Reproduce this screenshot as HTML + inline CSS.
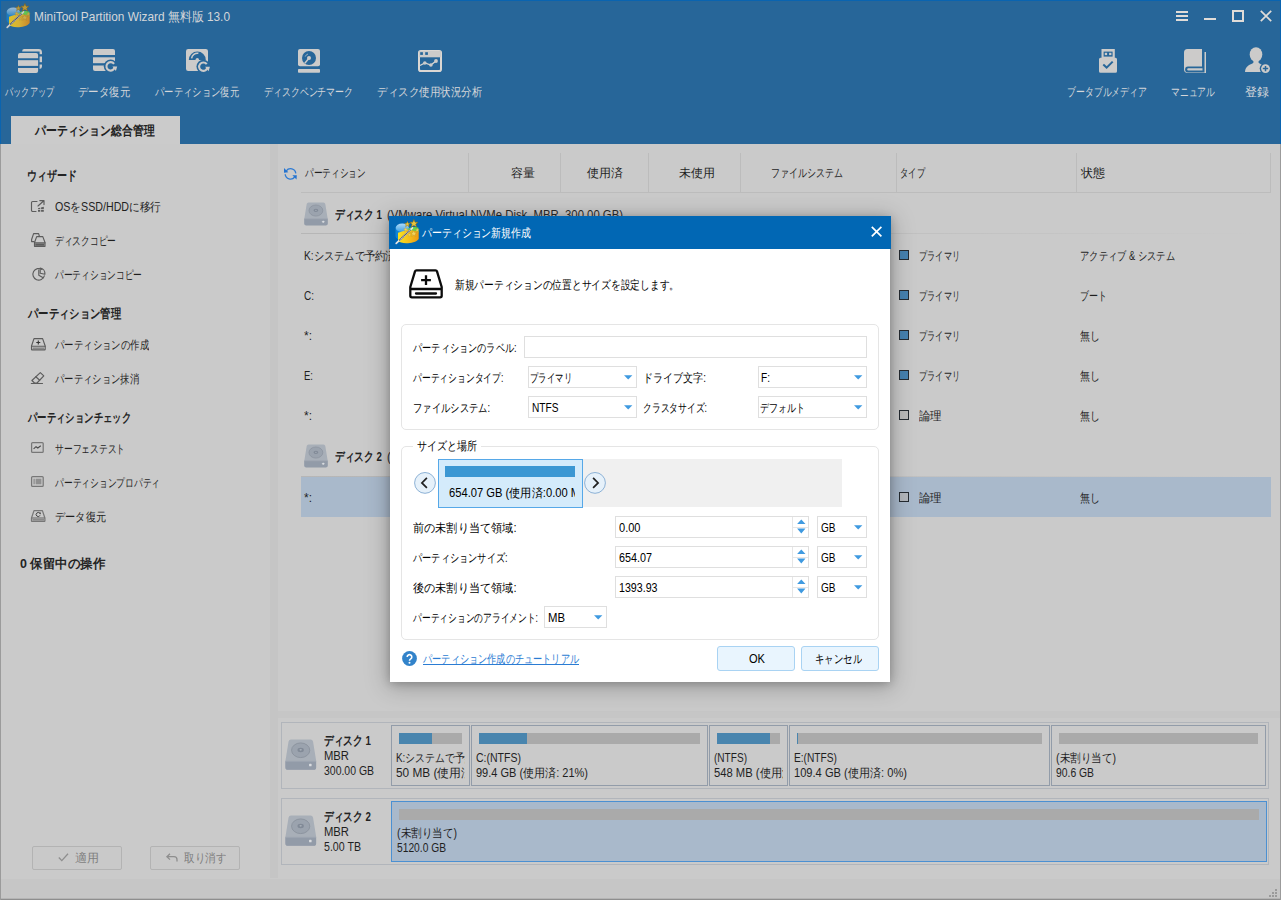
<!DOCTYPE html>
<html lang="ja">
<head>
<meta charset="utf-8">
<title>MiniTool Partition Wizard</title>
<style>
*{box-sizing:border-box;margin:0;padding:0}
html,body{width:1281px;height:900px;overflow:hidden;background:#cacaca}
body{font-family:"Liberation Sans",sans-serif;font-size:12px;color:#2a2a2a;position:relative}
.a{position:absolute;white-space:nowrap;overflow:hidden}
.t{position:absolute;white-space:nowrap;line-height:16px;height:16px;transform-origin:0 50%;font-size:12px}
svg{position:absolute;overflow:visible}
#hdr{left:0;top:0;width:1281px;height:144px;background:#266496}
.tl{color:#d4d6d9}
.sh{font-weight:bold;font-size:13px;color:#242424}
.si{color:#1f1f1f}
.btn{border:1px solid #b3b3b3;background:#c9c9c9;border-radius:2px}
.hs{width:1px;background:#bcbcbc}
.row{color:#1f1f1f}
.sq{border:1px solid #252b31}
.d{color:#000}
.gb{border:1px solid #e5e5e5;border-radius:5px}
.inp{border:1px solid #dfdfdf;background:#fff}
.dd{width:0;height:0;border-left:4.500px solid transparent;border-right:4.500px solid transparent;border-top:5px solid #3a96dd}
.dbtn{border:1px solid #a9d3f3;background:#e9f5fe;border-radius:3px}
</style>
</head>
<body>
<div class="a" style="left:0px;top:0px;width:1281px;height:144px;background:#276699"></div>
<div class="a" style="left:0px;top:0px;width:1281px;height:1px;background:#0a64b0"></div>
<div class="a" style="left:0px;top:0px;width:1px;height:144px;background:#0a64b0"></div>
<div class="a" style="left:1280px;top:0px;width:1px;height:144px;background:#0a64b0"></div>
<svg style="left:4.5px;top:3.3px" width="26" height="26" viewBox="0 0 26 26">
<defs>
<linearGradient id="wy" x1="0" x2="1" y1="0" y2="0"><stop offset="0" stop-color="#dcc228"/><stop offset=".5" stop-color="#d6b036"/><stop offset="1" stop-color="#c8862a"/></linearGradient>
<linearGradient id="wb" x1="0" x2="0" y1="0" y2="1"><stop offset="0" stop-color="#9fbdd6"/><stop offset="1" stop-color="#2f86c4"/></linearGradient>
</defs>
<path d="M1.500 9.500a7 4.300 0 0 1 14 0v7.500a7 4.300 0 0 1-14 0z" fill="#1c7cc0"/>
<ellipse cx="8.300" cy="8.700" rx="6.600" ry="4.300" fill="url(#wb)"/>
<path d="M13.500 10.500c2-2.500 8-3 11-1.800v5.300h-11z" fill="#5cc654"/>
<path d="M4 13.800l9.500-3 11.200 1.600v7.600c-2 3-8 4.200-12.400 4.200-4 0-7-1-8.300-2.200z" fill="url(#wy)"/>
<path d="M2.200 24.300L18.500 8.800" stroke="#c9c9c9" stroke-width="1.700" stroke-linecap="round"/>
<path d="M5.200 21.400L16.600 10.600" stroke="#50565c" stroke-width="1.700" stroke-dasharray="1.100 .5"/>
<g fill="#b9983a" stroke="#7d621c" stroke-width=".45">
<path d="M0-3.200L.9-1.100 3.100-1 1.400.5 2 2.700 0 1.500-2 2.700-1.400.5-3.100-1-.9-1.100z" transform="translate(13.400 5.200) scale(.9)"/>
<path d="M0-3.200L.9-1.100 3.100-1 1.400.5 2 2.700 0 1.500-2 2.700-1.400.5-3.100-1-.9-1.100z" transform="translate(19.900 4.600) scale(1.300)"/>
</g>
<g fill="#c9ab4c" stroke="#9a7d2a" stroke-width=".35">
<path d="M0-3.200L.9-1.100 3.100-1 1.400.5 2 2.700 0 1.500-2 2.700-1.400.5-3.100-1-.9-1.100z" transform="translate(11.700 10.600) scale(.68)"/>
<path d="M0-3.200L.9-1.100 3.100-1 1.400.5 2 2.700 0 1.500-2 2.700-1.400.5-3.100-1-.9-1.100z" transform="translate(19.700 14.600) scale(1)"/>
<path d="M0-3.200L.9-1.100 3.100-1 1.400.5 2 2.700 0 1.500-2 2.700-1.400.5-3.100-1-.9-1.100z" transform="translate(23.300 11.100) scale(.64)"/>
<path d="M0-3.200L.9-1.100 3.100-1 1.400.5 2 2.700 0 1.500-2 2.700-1.400.5-3.100-1-.9-1.100z" transform="translate(15.400 15.900) scale(.55)"/>
</g></svg>
<div class="t tl" style="left:34px;top:9px;--w:196;transform:scaleX(0.9134);font-size:13px">MiniTool Partition Wizard 無料版 13.0</div>
<div class="a" style="left:1176px;top:11px;width:12px;height:2px;background:#e0dcd8"></div>
<div class="a" style="left:1176px;top:15px;width:12px;height:2px;background:#e0dcd8"></div>
<div class="a" style="left:1176px;top:19px;width:12px;height:2px;background:#e0dcd8"></div>
<div class="a" style="left:1204px;top:18px;width:12px;height:2px;background:#e0dcd8"></div>
<div class="a" style="left:1232px;top:10px;width:12px;height:12px;border:2px solid #e0dcd8"></div>
<svg style="left:1260px;top:10px" width="12" height="12" viewBox="0 0 12 12"><path d="M.8.800l10.400 10.400M11.200.800L.800 11.200" stroke="#e0dcd8" stroke-width="1.700" fill="none"/></svg>
<svg style="left:18px;top:49px" width="24" height="24" viewBox="0 0 24 24">
<path d="M6.200 0H20.600A3.400 3.400 0 0 1 24 3.400V17.600A2.400 2.400 0 0 1 21.600 20V2.600H4.200V2A2 2 0 0 1 6.200 0z" fill="#cccbca"/>
<rect x="20.800" y="5.200" width="4" height="2.300" fill="#276699"/><rect x="20.800" y="13.200" width="4" height="2.300" fill="#276699"/>
<path d="M2 4.100H18.100A2 2 0 0 1 20.100 6.100V9.300H0V6.100A2 2 0 0 1 2 4.100z" fill="#cccbca"/>
<rect x="0" y="11.200" width="20.100" height="5.700" fill="#cccbca"/>
<path d="M0 18.900H20.100V22A2 2 0 0 1 18.100 24H2A2 2 0 0 1 0 22z" fill="#cccbca"/></svg>
<svg style="left:93px;top:49px" width="24" height="24" viewBox="0 0 24 24">
<path d="M2 0H20A2 2 0 0 1 22 2V5.900H0V2A2 2 0 0 1 2 0z" fill="#cccbca"/>
<rect x="0" y="8.300" width="22" height="5.900" fill="#cccbca"/>
<path d="M0 16.400H22V20A2 2 0 0 1 20 22H2A2 2 0 0 1 0 20z" fill="#cccbca"/><circle cx="17.6" cy="17.3" r="6.800000000000001" fill="#276699"/><path d="M21.04 14.91A4.2 4.2 0 1 0 21.80 17.90" fill="none" stroke="#cccbca" stroke-width="2.100"/><path d="M19.40 17.50h4.800l-1.300 4.500z" fill="#cccbca"/></svg>
<svg style="left:186px;top:49px" width="24" height="24" viewBox="0 0 24 24">
<rect x="0" y="0" width="22" height="22" rx="2.200" fill="#cccbca"/>
<path d="M2.800 11A8.500 8.500 0 0 1 19.800 11z" fill="#276699"/>
<path d="M5.600 9.400A5.800 5.800 0 0 1 12.400 4.300" fill="none" stroke="#cccbca" stroke-width="1.500"/>
<circle cx="11.300" cy="10.600" r="1.700" fill="#cccbca"/><circle cx="17.3" cy="17.6" r="6.800000000000001" fill="#276699"/><path d="M20.74 15.21A4.2 4.2 0 1 0 21.50 18.20" fill="none" stroke="#cccbca" stroke-width="2.100"/><path d="M19.10 17.80h4.800l-1.300 4.500z" fill="#cccbca"/></svg>
<svg style="left:298px;top:49px" width="22" height="24" viewBox="0 0 22 24">
<rect x="0" y="0" width="22" height="17.300" rx="2" fill="#cccbca"/>
<rect x="0" y="20" width="22" height="3.800" rx=".8" fill="#cccbca"/>
<circle cx="11" cy="9" r="7" fill="#276699"/>
<circle cx="11" cy="9" r="2" fill="#cccbca"/>
<path d="M10.500 9.800L6.800 14.200" stroke="#cccbca" stroke-width="1.500"/>
<path d="M7.200 7.600A4.200 4.200 0 0 1 10 5" stroke="#cccbca" stroke-width="1" fill="none" opacity=".7"/></svg>
<svg style="left:418px;top:50px" width="24" height="22" viewBox="0 0 24 22">
<rect x="1" y="1" width="22" height="20" rx="1.800" fill="none" stroke="#dbd7d3" stroke-width="2"/>
<rect x="1" y="1" width="22" height="6.300" fill="#cccbca"/>
<rect x="2.200" y="2.200" width="2.700" height="2.700" fill="#276699"/><rect x="7.200" y="2.200" width="2.700" height="2.700" fill="#276699"/>
<path d="M2 15.500L6.800 13 12.900 15 18 11" fill="none" stroke="#dbd7d3" stroke-width="1.300"/>
<circle cx="6.800" cy="13" r="1.800" fill="#cccbca"/><circle cx="12.900" cy="15" r="1.800" fill="#cccbca"/><circle cx="18" cy="11" r="1.900" fill="#cccbca"/></svg>
<svg style="left:1099px;top:49px" width="18" height="24" viewBox="0 0 18 24">
<path d="M2.500 0H15.800V9H2.500z" fill="#cccbca"/>
<rect x="4.600" y="2.600" width="9" height="5" fill="#276699"/>
<rect x="5.800" y="3.800" width="2.300" height="2.300" fill="#cccbca"/><rect x="10.100" y="3.800" width="2.300" height="2.300" fill="#cccbca"/>
<path d="M1.500 8.700H16.500A1.500 1.500 0 0 1 18 10.200V22.200A1.500 1.500 0 0 1 16.500 23.700H1.500A1.500 1.500 0 0 1 0 22.200V10.200A1.500 1.500 0 0 1 1.500 8.700z" fill="#cccbca"/>
<path d="M4.300 15.600L7.600 18.600 13.700 12.600" fill="none" stroke="#276699" stroke-width="2"/></svg>
<svg style="left:1184px;top:49px" width="22" height="24" viewBox="0 0 22 24">
<path d="M3.500 0H18V17.600H4A2.900 2.900 0 0 0 4 23.400H20.500V3H22V24H3.800A3.800 3.800 0 0 1 0 20.200V3.500A3.500 3.500 0 0 1 3.500 0z" fill="#cccbca"/>
<path d="M4.300 19.300H18.500V21.500H4.300A1.100 1.100 0 0 1 4.300 19.300z" fill="#cccbca"/></svg>
<svg style="left:1245px;top:47px" width="26" height="26" viewBox="0 0 26 26">
<ellipse cx="11" cy="7.600" rx="6.300" ry="7.400" fill="#cccbca"/>
<path d="M0 25C.4 19.500 4 18 7.800 16.300 8.800 15.800 8.600 14 8 13H14C13.400 14 13.200 15.800 14.200 16.300 18 18 21.600 19.500 22 25z" fill="#cccbca"/>
<circle cx="20.500" cy="21.600" r="5.800" fill="#276699"/>
<circle cx="20.500" cy="21.600" r="4.400" fill="#cccbca"/>
<path d="M20.500 18.900V24.300M17.800 21.600H23.200" stroke="#276699" stroke-width="1.500"/></svg>
<div class="t tl" style="left:5px;top:84px;--w:49;transform:scaleX(0.6806);">バックアップ</div>
<div class="t tl" style="left:78px;top:84px;--w:52;transform:scaleX(0.8667);">データ復元</div>
<div class="t tl" style="left:155px;top:84px;--w:84;transform:scaleX(0.7778);">パーティション復元</div>
<div class="t tl" style="left:264px;top:84px;--w:89;transform:scaleX(0.7417);">ディスクベンチマーク</div>
<div class="t tl" style="left:377px;top:84px;--w:105;transform:scaleX(0.875);">ディスク使用状況分析</div>
<div class="t tl" style="left:1067px;top:84px;--w:80;transform:scaleX(0.7407);">ブータブルメディア</div>
<div class="t tl" style="left:1171px;top:84px;--w:44;transform:scaleX(0.7333);">マニュアル</div>
<div class="t tl" style="left:1245px;top:84px;--w:24;transform:scaleX(1);">登録</div>
<div class="a" style="left:11px;top:116px;width:169px;height:28px;background:#cbcbcb"></div>
<div class="t" style="left:34.5px;top:123px;--w:119.5;transform:scaleX(0.8357);font-weight:bold;font-size:13px;color:#222">パーティション総合管理</div>
<div class="a" style="left:1px;top:144px;width:269px;height:734px;background:#cacaca"></div>
<div class="a" style="left:270px;top:144px;width:8px;height:734px;background:#c5c5c5"></div>
<div class="a" style="left:278px;top:144px;width:1003px;height:734px;background:#cacaca"></div>
<div class="a" style="left:0px;top:879px;width:1281px;height:20px;background:#c6c6c6"></div>
<div class="a" style="left:0px;top:898px;width:1281px;height:1px;background:#b4b4b4"></div>
<div class="a" style="left:0px;top:899px;width:1281px;height:1px;background:#8e8e8e"></div>
<div class="a" style="left:0px;top:144px;width:1px;height:756px;background:#9b9b9b"></div>
<div class="a" style="left:1280px;top:144px;width:1px;height:756px;background:#9b9b9b"></div>
<svg style="left:1269px;top:889px" width="9" height="9" viewBox="0 0 9 9"><g fill="#9a9a9a"><rect x="6" y="0" width="2" height="2"/><rect x="3" y="3" width="2" height="2"/><rect x="6" y="3" width="2" height="2"/><rect x="0" y="6" width="2" height="2"/><rect x="3" y="6" width="2" height="2"/><rect x="6" y="6" width="2" height="2"/></g></svg>
<div class="t sh" style="left:27px;top:168px;--w:50;transform:scaleX(0.7692);">ウィザード</div>
<div class="t si" style="left:55px;top:199px;--w:106;transform:scaleX(0.8882);">OSをSSD/HDDに移行</div>
<div class="t si" style="left:54.5px;top:233px;--w:61;transform:scaleX(0.7262);">ディスクコピー</div>
<div class="t si" style="left:55px;top:267px;--w:87;transform:scaleX(0.725);">パーティションコピー</div>
<div class="t sh" style="left:27.5px;top:306px;--w:93;transform:scaleX(0.7949);">パーティション管理</div>
<div class="t si" style="left:55px;top:337px;--w:94;transform:scaleX(0.7833);">パーティションの作成</div>
<div class="t si" style="left:55px;top:371px;--w:84;transform:scaleX(0.7778);">パーティション抹消</div>
<div class="t sh" style="left:27.5px;top:410px;--w:103;transform:scaleX(0.7203);">パーティションチェック</div>
<div class="t si" style="left:55px;top:441px;--w:70;transform:scaleX(0.7292);">サーフェステスト</div>
<div class="t si" style="left:55px;top:475px;--w:105;transform:scaleX(0.7292);">パーティションプロパティ</div>
<div class="t si" style="left:55px;top:509px;--w:51;transform:scaleX(0.85);">データ復元</div>
<div class="t sh" style="left:20px;top:556px;--w:85;transform:scaleX(0.9567);">0 保留中の操作</div>
<svg style="left:31px;top:200px" width="14" height="12" viewBox="0 0 14 12"><path d="M6 1.500H1.700A1.200 1.200 0 0 0 .5 2.700V10.300A1.200 1.200 0 0 0 1.700 11.500H5" fill="none" stroke="#5c5c5c" stroke-width="1.150" stroke-linejoin="round" stroke-linecap="round"/>
<path d="M7 6L12.800 .8M8.800 .6H13V4.600" fill="none" stroke="#5c5c5c" stroke-width="1.150" stroke-linejoin="round" stroke-linecap="round"/>
<path d="M7 8.300L12.800 6.800V11.800H7z" fill="#5c5c5c"/><path d="M9.600 6.500V12M6.800 9.500H13" stroke="#ccc" stroke-width=".8"/></svg>
<svg style="left:31px;top:233px" width="15" height="14" viewBox="0 0 15 14"><path d="M2.600 .6H7.600L8.300 3M.6 6.500L2.600 .6M.6 6.500V8.600H3" fill="none" stroke="#5c5c5c" stroke-width="1.150" stroke-linejoin="round" stroke-linecap="round"/>
<path d="M5.700 3.600H11.800L14 9.500V13.300H3.500V9.500z" fill="none" stroke="#5c5c5c" stroke-width="1.150" stroke-linejoin="round" stroke-linecap="round"/><path d="M3.500 9.800H14" fill="none" stroke="#5c5c5c" stroke-width="1.150" stroke-linejoin="round" stroke-linecap="round"/><rect x="4.200" y="10.500" width="9.200" height="2.300" fill="#5c5c5c"/></svg>
<svg style="left:31.5px;top:267px" width="13" height="14" viewBox="0 0 13 14"><path d="M10 2.500A5.800 5.800 0 1 0 12.300 8.800" fill="none" stroke="#5c5c5c" stroke-width="1.150" stroke-linejoin="round" stroke-linecap="round"/>
<path d="M6.800 2.800V8.200L11.200 10.800" fill="none" stroke="#5c5c5c" stroke-width="1.150" stroke-linejoin="round" stroke-linecap="round"/>
<path d="M8.200 1A5.800 5.800 0 0 1 12.900 7.200L8.200 6.300z" fill="none" stroke="#5c5c5c" stroke-width="1.150" stroke-linejoin="round" stroke-linecap="round"/></svg>
<svg style="left:31px;top:337.5px" width="15" height="12.5" viewBox="0 0 15 12.5"><path d="M3 .6H11.600L14.200 8V11.300A.6 .6 0 0 1 13.600 11.900H.9A.6 .6 0 0 1 .5 11.300V8z" fill="none" stroke="#5c5c5c" stroke-width="1.150" stroke-linejoin="round" stroke-linecap="round"/><path d="M.6 8.200H14" fill="none" stroke="#5c5c5c" stroke-width="1.150" stroke-linejoin="round" stroke-linecap="round"/>
<rect x="1.600" y="9.400" width="11.500" height="1.600" fill="#8a8a8a"/>
<path d="M7.300 2.500V6.500M5.300 4.500H9.300" stroke="#333" stroke-width="1.100"/></svg>
<svg style="left:31px;top:372px" width="13.5" height="12" viewBox="0 0 13.5 12"><path d="M9.300 .6L12.800 3.800 6 11H3.500L.9 8.500z" fill="none" stroke="#5c5c5c" stroke-width="1.150" stroke-linejoin="round" stroke-linecap="round"/><path d="M4.800 4.700L8.700 8.200" fill="none" stroke="#5c5c5c" stroke-width="1.150" stroke-linejoin="round" stroke-linecap="round"/><path d="M.3 11.500H11.500" fill="none" stroke="#5c5c5c" stroke-width="1.150" stroke-linejoin="round" stroke-linecap="round"/></svg>
<svg style="left:31.4px;top:442.3px" width="12.8" height="11" viewBox="0 0 12.8 11"><rect x=".6" y=".6" width="11.600" height="9.800" rx="1" fill="none" stroke="#777" stroke-width="1.250" stroke-linejoin="round"/>
<path d="M2.600 6.800L5 4.700 6.800 6 9.800 3.800" fill="none" stroke="#4a4a4a" stroke-width="1.100"/></svg>
<svg style="left:31.4px;top:476.2px" width="12.8" height="11" viewBox="0 0 12.8 11"><rect x=".6" y=".6" width="11.600" height="9.800" rx="1" fill="none" stroke="#777" stroke-width="1.250" stroke-linejoin="round"/>
<rect x="2.500" y="2.700" width="1.200" height="5.600" fill="#888"/><rect x="4.600" y="2.700" width="5.800" height="5.600" fill="#909090"/></svg>
<svg style="left:31px;top:510px" width="14.5" height="12" viewBox="0 0 14.5 12"><path d="M3 .6H11.400L13.900 8V10.800A.6 .6 0 0 1 13.300 11.400H1.100A.6 .6 0 0 1 .5 10.800V8z" fill="none" stroke="#777" stroke-width="1.250" stroke-linejoin="round"/><path d="M.6 8H13.900" fill="none" stroke="#777" stroke-width="1.250" stroke-linejoin="round"/>
<rect x="1.500" y="9" width="11.500" height="1.700" fill="#8a8a8a"/>
<path d="M8.800 3.400A2 2 0 1 0 9 5.300" fill="none" stroke="#444" stroke-width="1"/><path d="M7.600 2.400H9.800V4.400z" fill="#444"/></svg>
<div class="a btn" style="left:32px;top:846px;width:90px;height:24px;"></div>
<div class="a btn" style="left:150px;top:846px;width:90px;height:24px;"></div>
<svg style="left:58px;top:853px" width="11" height="9" viewBox="0 0 11 9"><path d="M.8 4.500L3.800 7.600 10 .8" fill="none" stroke="#8e8e8e" stroke-width="1.300"/></svg>
<div class="t" style="left:74.5px;top:850px;--w:24;transform:scaleX(1);color:#7e7e7e">適用</div>
<svg style="left:166px;top:853px" width="12" height="9" viewBox="0 0 12 9"><path d="M4 .8L.9 3.700 4 6.600M1 3.700H8A3 3 0 0 1 11 6.700V8.500" fill="none" stroke="#8e8e8e" stroke-width="1.300"/></svg>
<div class="t" style="left:184px;top:850px;--w:42;transform:scaleX(0.875);color:#7e7e7e">取り消す</div>
<svg style="left:283.5px;top:167px" width="13" height="13" viewBox="0 0 13 13"><path d="M2.300 3.800A5.300 5.300 0 0 1 11.800 6.300M1.200 7.300A5.300 5.300 0 0 0 10.700 10" fill="none" stroke="#2e7bd4" stroke-width="1.350"/>
<path d="M0 1V5.700L4.300 5.300z" fill="#2473cf"/><path d="M8.400 8.300H12.800L12.500 12.400z" fill="#2473cf"/></svg>
<div class="t row" style="left:304.5px;top:165px;--w:60.5;transform:scaleX(0.7202);">パーティション</div>
<div class="t row" style="left:511px;top:165px;--w:24;transform:scaleX(1);">容量</div>
<div class="t row" style="left:586.5px;top:165px;--w:36;transform:scaleX(1);">使用済</div>
<div class="t row" style="left:679px;top:165px;--w:36;transform:scaleX(1);">未使用</div>
<div class="t row" style="left:771px;top:165px;--w:72;transform:scaleX(0.75);">ファイルシステム</div>
<div class="t row" style="left:900px;top:165px;--w:25;transform:scaleX(0.6944);">タイプ</div>
<div class="t row" style="left:1081px;top:165px;--w:24;transform:scaleX(1);">状態</div>
<div class="a hs" style="left:468px;top:153px;width:1px;height:39px;"></div>
<div class="a hs" style="left:560px;top:153px;width:1px;height:39px;"></div>
<div class="a hs" style="left:648px;top:153px;width:1px;height:39px;"></div>
<div class="a hs" style="left:740px;top:153px;width:1px;height:39px;"></div>
<div class="a hs" style="left:896px;top:153px;width:1px;height:39px;"></div>
<div class="a hs" style="left:1076px;top:153px;width:1px;height:39px;"></div>
<div class="a hs" style="left:1270px;top:153px;width:1px;height:39px;"></div>
<div class="a" style="left:301px;top:192px;width:970px;height:1px;background:#bcbcbc"></div>
<svg width="0" height="0" style="left:0;top:0"><defs>
<symbol id="hdd" viewBox="0 0 24 24" preserveAspectRatio="none">
<path d="M4.600 .4H19.400A2 2 0 0 1 21.300 1.900L23.700 16.800V21.600A2 2 0 0 1 21.700 23.600H2.300A2 2 0 0 1 .3 21.600V16.800L2.700 1.900A2 2 0 0 1 4.600 .4z" fill="#a8afb8"/>
<path d="M.3 17H23.700V21.600A2 2 0 0 1 21.700 23.600H2.300A2 2 0 0 1 .3 21.600z" fill="#929ba8"/>
<path d="M.3 17H23.700" stroke="#a0a8b3" stroke-width=".6"/>
<ellipse cx="11.900" cy="8.600" rx="6.900" ry="5.600" fill="#9ba3ae" stroke="#8a929d" stroke-width=".7"/>
<ellipse cx="11.900" cy="8.400" rx="2.400" ry="1.700" fill="#818a97"/><ellipse cx="11.900" cy="8.300" rx=".9" ry=".6" fill="#a9b0b9"/>
<rect x="18.300" y="19" width="1.900" height="1.900" rx=".5" fill="#d9dcdf"/>
</symbol></defs></svg>
<svg style="left:304.2px;top:202px" width="24" height="23.8"><use href="#hdd"/></svg>
<div class="t" style="left:335px;top:207px;--w:47;transform:scaleX(0.7479);font-weight:bold;font-size:13px;color:#222">ディスク 1</div>
<div class="t" style="left:387px;top:207px;--w:236;transform:scaleX(0.8719);font-size:13px;color:#2a2a2a">(VMware Virtual NVMe Disk, MBR, 300.00 GB)</div>
<div class="a" style="left:301px;top:233px;width:962px;height:1px;background:linear-gradient(90deg,#b6b6b6 0,#bdbdbd 50%,#cacaca 100%)"></div>
<div class="t row" style="left:304px;top:248px;--w:102;transform:scaleX(0.8547);">K:システムで予約済み</div>
<div class="t row" style="left:304px;top:288px;--w:10;transform:scaleX(0.8333);">C:</div>
<div class="t row" style="left:304px;top:328px;--w:8;transform:scaleX(0.9981);">*:</div>
<div class="t row" style="left:304px;top:368px;--w:9;transform:scaleX(0.7934);">E:</div>
<div class="t row" style="left:304px;top:408px;--w:8;transform:scaleX(0.9981);">*:</div>
<svg style="left:304.2px;top:444px" width="24" height="23.8"><use href="#hdd"/></svg>
<div class="t" style="left:335px;top:449px;--w:47;transform:scaleX(0.7479);font-weight:bold;font-size:13px;color:#222">ディスク 2</div>
<div class="t" style="left:387px;top:449px;--w:220;transform:scaleX(0.8668);font-size:13px;color:#2a2a2a">(VMware Virtual NVMe Disk, MBR, 5.00 TB)</div>
<div class="a" style="left:301px;top:476px;width:962px;height:1px;background:linear-gradient(90deg,#b6b6b6 0,#bdbdbd 50%,#cacaca 100%)"></div>
<div class="a" style="left:301px;top:477px;width:970px;height:40px;background:#a9b9cb"></div>
<div class="t row" style="left:304px;top:490px;--w:8;transform:scaleX(0.9981);">*:</div>
<div class="a sq" style="left:899px;top:250px;width:10px;height:10px;background:#4682b0"></div>
<div class="t row" style="left:919px;top:248px;--w:41;transform:scaleX(0.6833);">プライマリ</div>
<div class="t row" style="left:1080px;top:248px;--w:95;transform:scaleX(0.7744);">アクティブ &amp; システム</div>
<div class="a sq" style="left:899px;top:290px;width:10px;height:10px;background:#4682b0"></div>
<div class="t row" style="left:919px;top:288px;--w:41;transform:scaleX(0.6833);">プライマリ</div>
<div class="t row" style="left:1080px;top:288px;--w:27;transform:scaleX(0.75);">ブート</div>
<div class="a sq" style="left:899px;top:330px;width:10px;height:10px;background:#4682b0"></div>
<div class="t row" style="left:919px;top:328px;--w:41;transform:scaleX(0.6833);">プライマリ</div>
<div class="t row" style="left:1080px;top:328px;--w:20;transform:scaleX(0.8333);">無し</div>
<div class="a sq" style="left:899px;top:370px;width:10px;height:10px;background:#4682b0"></div>
<div class="t row" style="left:919px;top:368px;--w:41;transform:scaleX(0.6833);">プライマリ</div>
<div class="t row" style="left:1080px;top:368px;--w:20;transform:scaleX(0.8333);">無し</div>
<div class="a sq" style="left:899px;top:410px;width:10px;height:10px;background:#bababa"></div>
<div class="t row" style="left:919px;top:408px;--w:23;transform:scaleX(0.9583);">論理</div>
<div class="t row" style="left:1080px;top:408px;--w:20;transform:scaleX(0.8333);">無し</div>
<div class="a sq" style="left:899px;top:492px;width:10px;height:10px;background:#b3b7bc"></div>
<div class="t row" style="left:919px;top:490px;--w:23;transform:scaleX(0.9583);">論理</div>
<div class="t row" style="left:1080px;top:490px;--w:20;transform:scaleX(0.8333);">無し</div>
<div class="a" style="left:278px;top:711px;width:1002px;height:7px;background:#c6c6c6"></div>
<div class="a" style="left:281px;top:722px;width:988px;height:67px;border:1px solid #b1b5bb"></div>
<div class="a" style="left:281px;top:798px;width:988px;height:67px;border:1px solid #b1b5bb"></div>
<svg style="left:285.4px;top:739px" width="31.6" height="31.4"><use href="#hdd"/></svg>
<svg style="left:285.4px;top:815.3px" width="31.6" height="31.4"><use href="#hdd"/></svg>
<div class="t" style="left:324px;top:733px;--w:47;transform:scaleX(0.7479);font-weight:bold;font-size:13px;color:#222">ディスク 1</div>
<div class="t row" style="left:324px;top:748px;--w:25;transform:scaleX(0.9373);">MBR</div>
<div class="t row" style="left:324px;top:763px;--w:50;transform:scaleX(0.8715);">300.00 GB</div>
<div class="t" style="left:324px;top:809px;--w:47;transform:scaleX(0.7479);font-weight:bold;font-size:13px;color:#222">ディスク 2</div>
<div class="t row" style="left:324px;top:824px;--w:25;transform:scaleX(0.9373);">MBR</div>
<div class="t row" style="left:324px;top:839px;--w:37;transform:scaleX(0.8849);">5.00 TB</div>
<div class="a" style="left:391px;top:725px;width:79px;height:61px;border:1px solid #929ca9"></div>
<div class="a" style="left:399px;top:733px;width:63px;height:11px;background:#aaaaaa"></div>
<div class="a" style="left:399px;top:733px;width:33px;height:11px;background:#4985ae"></div>
<div class="a" style="left:396px;top:749.5px;width:69px;height:16px"><div class="t row" style="left:0;top:0;--w:98.2;transform:scaleX(0.8228);">K:システムで予約済み</div></div>
<div class="a" style="left:396px;top:764.5px;width:69px;height:16px"><div class="t row" style="left:0;top:0;--w:111;transform:scaleX(0.9849);">50 MB (使用済: 53%)</div></div>
<div class="a" style="left:471px;top:725px;width:237px;height:61px;border:1px solid #929ca9"></div>
<div class="a" style="left:479px;top:733px;width:221px;height:11px;background:#aaaaaa"></div>
<div class="a" style="left:479px;top:733px;width:48px;height:11px;background:#4985ae"></div>
<div class="a" style="left:476px;top:749.5px;width:227px;height:16px"><div class="t row" style="left:0;top:0;--w:45;transform:scaleX(0.8767);">C:(NTFS)</div></div>
<div class="a" style="left:476px;top:764.5px;width:227px;height:16px"><div class="t row" style="left:0;top:0;--w:112;transform:scaleX(0.9177);">99.4 GB (使用済: 21%)</div></div>
<div class="a" style="left:709px;top:725px;width:79px;height:61px;border:1px solid #929ca9"></div>
<div class="a" style="left:717px;top:733px;width:63px;height:11px;background:#aaaaaa"></div>
<div class="a" style="left:717px;top:733px;width:53px;height:11px;background:#4985ae"></div>
<div class="a" style="left:714px;top:749.5px;width:69px;height:16px"><div class="t row" style="left:0;top:0;--w:33;transform:scaleX(0.8391);">(NTFS)</div></div>
<div class="a" style="left:714px;top:764.5px;width:69px;height:16px"><div class="t row" style="left:0;top:0;--w:111.7;transform:scaleX(0.9357);">548 MB (使用済: 80%)</div></div>
<div class="a" style="left:789px;top:725px;width:261px;height:61px;border:1px solid #929ca9"></div>
<div class="a" style="left:797px;top:733px;width:245px;height:11px;background:#aaaaaa"></div>
<div class="a" style="left:797px;top:733px;width:1px;height:11px;background:#4985ae"></div>
<div class="a" style="left:794px;top:749.5px;width:251px;height:16px"><div class="t row" style="left:0;top:0;--w:43;transform:scaleX(0.8486);">E:(NTFS)</div></div>
<div class="a" style="left:794px;top:764.5px;width:251px;height:16px"><div class="t row" style="left:0;top:0;--w:113;transform:scaleX(0.9259);">109.4 GB (使用済: 0%)</div></div>
<div class="a" style="left:1051px;top:725px;width:215px;height:61px;border:1px solid #929ca9"></div>
<div class="a" style="left:1059px;top:733px;width:199px;height:11px;background:#aaaaaa"></div>
<div class="a" style="left:1056px;top:749.5px;width:205px;height:16px"><div class="t row" style="left:0;top:0;--w:60;transform:scaleX(0.8824);">(未割り当て)</div></div>
<div class="a" style="left:1056px;top:764.5px;width:205px;height:16px"><div class="t row" style="left:0;top:0;--w:38;transform:scaleX(0.863);">90.6 GB</div></div>
<div class="a" style="left:391px;top:801px;width:876px;height:61px;border:1px solid #4b90d2;background:#a9b9cb"></div>
<div class="a" style="left:399px;top:809px;width:860px;height:11px;background:#aaaaaa"></div>
<div class="t row" style="left:396.5px;top:825px;--w:60;transform:scaleX(0.8824);">(未割り当て)</div>
<div class="t row" style="left:396.5px;top:840px;--w:49;transform:scaleX(0.854);">5120.0 GB</div>
<div class="a" style="left:390px;top:217px;width:500px;height:465px;background:#fff;box-shadow:0 3px 22px 3px rgba(0,0,0,.22),0 1px 9px 0 rgba(0,0,0,.24);overflow:visible"></div>
<div class="a" style="left:389px;top:216px;width:502px;height:33px;background:#0167b4"></div>
<svg style="left:394.4px;top:219.4px" width="26" height="26" viewBox="0 0 26 26">
<defs>
<linearGradient id="vy" x1="0" x2="1" y1="0" y2="0"><stop offset="0" stop-color="#fbe41c"/><stop offset=".5" stop-color="#f4c21c"/><stop offset="1" stop-color="#ee9a12"/></linearGradient>
<linearGradient id="vb" x1="0" x2="0" y1="0" y2="1"><stop offset="0" stop-color="#b4dcf6"/><stop offset="1" stop-color="#3aa0e6"/></linearGradient>
</defs>
<path d="M1.500 9.500a7 4.300 0 0 1 14 0v7.500a7 4.300 0 0 1-14 0z" fill="#0f84d8"/>
<ellipse cx="8.300" cy="8.700" rx="6.600" ry="4.300" fill="url(#vb)"/>
<path d="M13.500 10.500c2-2.500 8-3 11-1.800v5.300h-11z" fill="#62d44e"/>
<path d="M4 13.800l9.500-3 11.200 1.600v7.600c-2 3-8 4.200-12.400 4.200-4 0-7-1-8.300-2.200z" fill="url(#vy)"/>
<path d="M2.200 24.300L18.500 8.800" stroke="#e4e4e4" stroke-width="1.700" stroke-linecap="round"/>
<path d="M5.200 21.400L16.600 10.600" stroke="#5a5f66" stroke-width="1.700" stroke-dasharray="1.100 .5"/>
<g fill="#e9c53c" stroke="#8a6a14" stroke-width=".45">
<path d="M0-3.200L.9-1.100 3.100-1 1.400.5 2 2.700 0 1.500-2 2.700-1.400.5-3.100-1-.9-1.100z" transform="translate(13.400 5.200) scale(.9)"/>
<path d="M0-3.200L.9-1.100 3.100-1 1.400.5 2 2.700 0 1.500-2 2.700-1.400.5-3.100-1-.9-1.100z" transform="translate(19.900 4.600) scale(1.300)"/>
</g>
<g fill="#f0d460" stroke="#b08a22" stroke-width=".35">
<path d="M0-3.200L.9-1.100 3.100-1 1.400.5 2 2.700 0 1.500-2 2.700-1.400.5-3.100-1-.9-1.100z" transform="translate(11.700 10.600) scale(.68)"/>
<path d="M0-3.200L.9-1.100 3.100-1 1.400.5 2 2.700 0 1.500-2 2.700-1.400.5-3.100-1-.9-1.100z" transform="translate(19.700 14.600) scale(1)"/>
<path d="M0-3.200L.9-1.100 3.100-1 1.400.5 2 2.700 0 1.500-2 2.700-1.400.5-3.100-1-.9-1.100z" transform="translate(23.300 11.100) scale(.64)"/>
<path d="M0-3.200L.9-1.100 3.100-1 1.400.5 2 2.700 0 1.500-2 2.700-1.400.5-3.100-1-.9-1.100z" transform="translate(15.400 15.900) scale(.55)"/>
</g></svg>
<div class="t" style="left:422px;top:225px;--w:109;transform:scaleX(0.8258);color:#fff">パーティション新規作成</div>
<svg style="left:870.5px;top:226.4px" width="11.2" height="11.2" viewBox="0 0 11.2 11.2"><path d="M.8 .8l9.600 9.600M10.400 .8L.8 10.400" stroke="#fff" stroke-width="1.700" fill="none"/></svg>
<svg style="left:408.5px;top:269px" width="34" height="30" viewBox="0 0 34 30"><path d="M7.500 1.300h19a1.600 1.600 0 0 1 1.500 1.100l4.700 15.600v8.700a1.600 1.600 0 0 1-1.600 1.600H2.900a1.600 1.600 0 0 1-1.600-1.600v-8.700L6 2.400a1.600 1.600 0 0 1 1.500-1.100zM1.500 20h31M7 24.500h20" fill="none" stroke="#0c0c0c" stroke-width="2.300" stroke-linejoin="round" stroke-linecap="round"/><path d="M17 6.300v9.800M12.100 11.200h9.800" stroke="#0c0c0c" stroke-width="2.300" fill="none"/></svg>
<div class="t d" style="left:454.5px;top:277px;--w:224;transform:scaleX(0.8116);">新規パーティションの位置とサイズを設定します。</div>
<div class="a gb" style="left:401px;top:324px;width:478px;height:106px;"></div>
<div class="t d" style="left:412.5px;top:340px;--w:103.5;transform:scaleX(0.7647);">パーティションのラベル:</div>
<div class="a inp" style="left:524px;top:336px;width:343px;height:22px;"></div>
<div class="t d" style="left:412.5px;top:370px;--w:90.5;transform:scaleX(0.7337);">パーティションタイプ:</div>
<div class="a inp" style="left:528px;top:366px;width:109px;height:22px;"></div>
<div class="t d" style="left:530px;top:370px;--w:42;transform:scaleX(0.7);">プライマリ</div>
<svg style="left:624.3px;top:375.3px" width="8.4" height="4.6" viewBox="0 0 8.4 4.6"><path d="M0 .3H8.400L4.200 4.600z" fill="#3f9ae0"/></svg>
<div class="t d" style="left:642.5px;top:370px;--w:63;transform:scaleX(0.8362);">ドライブ文字:</div>
<div class="a inp" style="left:758px;top:366px;width:109px;height:22px;"></div>
<div class="t d" style="left:761px;top:370px;--w:9;transform:scaleX(0.8433);">F:</div>
<svg style="left:854.3px;top:375.3px" width="8.4" height="4.6" viewBox="0 0 8.4 4.6"><path d="M0 .3H8.400L4.200 4.600z" fill="#3f9ae0"/></svg>
<div class="t d" style="left:412.5px;top:400px;--w:77;transform:scaleX(0.7751);">ファイルシステム:</div>
<div class="a inp" style="left:528px;top:396px;width:109px;height:22px;"></div>
<div class="t d" style="left:531.5px;top:400px;--w:26.5;transform:scaleX(0.8455);">NTFS</div>
<svg style="left:624.3px;top:405.3px" width="8.4" height="4.6" viewBox="0 0 8.4 4.6"><path d="M0 .3H8.400L4.200 4.600z" fill="#3f9ae0"/></svg>
<div class="t d" style="left:642.5px;top:400px;--w:64;transform:scaleX(0.7327);">クラスタサイズ:</div>
<div class="a inp" style="left:758px;top:396px;width:109px;height:22px;"></div>
<div class="t d" style="left:760px;top:400px;--w:45;transform:scaleX(0.75);">デフォルト</div>
<svg style="left:854.3px;top:405.3px" width="8.4" height="4.6" viewBox="0 0 8.4 4.6"><path d="M0 .3H8.400L4.200 4.600z" fill="#3f9ae0"/></svg>
<div class="a gb" style="left:401px;top:446px;width:478px;height:194px;"></div>
<div class="a" style="left:413px;top:438px;width:68px;height:16px;background:#fff"></div>
<div class="t d" style="left:416.5px;top:438px;--w:60;transform:scaleX(0.8333);">サイズと場所</div>
<div class="a" style="left:438px;top:459px;width:404px;height:48px;background:#f0f0f0"></div>
<div class="a" style="left:438px;top:459px;width:145px;height:49px;background:#d4ebfb;border:1px solid #56a8e8"></div>
<div class="a" style="left:445px;top:466px;width:130px;height:11px;background:#3b97d3"></div>
<div class="a" style="left:449px;top:485px;width:126px;height:16px"><div class="t d" style="left:0;top:0;--w:142.300;transform:scaleX(0.9317);">654.07 GB (使用済:0.00 MB)</div></div>
<svg style="left:414px;top:472px" width="22" height="22" viewBox="0 0 22 22"><circle cx="11" cy="10.900" r="10.400" fill="#e6f1fa" stroke="#8db2d6" stroke-width="1"/><path d="M12.900 5.900l-5 5 5 5" fill="none" stroke="#222" stroke-width="1.700"/></svg>
<svg style="left:584px;top:472px" width="22" height="22" viewBox="0 0 22 22"><circle cx="11" cy="10.900" r="10.400" fill="#e6f1fa" stroke="#8db2d6" stroke-width="1"/><path d="M9.100 5.900l5 5-5 5" fill="none" stroke="#222" stroke-width="1.700"/></svg>
<div class="t d" style="left:412.5px;top:520px;--w:103.5;transform:scaleX(0.9296);">前の未割り当て領域:</div>
<div class="a inp" style="left:615px;top:516px;width:194px;height:22px;"></div>
<div class="a" style="left:792px;top:517px;width:1px;height:20px;background:#e6e6e6"></div>
<div class="a" style="left:793px;top:527px;width:15px;height:1px;background:#e6e6e6"></div>
<div class="t d" style="left:618.5px;top:520px;--w:21.5;transform:scaleX(0.9204);">0.00</div>
<svg style="left:796.5px;top:519px" width="8.6" height="15" viewBox="0 0 8.6 15"><path d="M4.300 .4L8.500 5H.1zM4.300 14.600L8.500 9.600H.1z" fill="#3f9ae0"/></svg>
<div class="a inp" style="left:817px;top:516px;width:50px;height:22px;"></div>
<div class="t d" style="left:820.5px;top:520px;--w:14.5;transform:scaleX(0.836);">GB</div>
<svg style="left:854.3px;top:525.3px" width="8.4" height="4.6" viewBox="0 0 8.4 4.6"><path d="M0 .3H8.400L4.200 4.600z" fill="#3f9ae0"/></svg>
<div class="t d" style="left:412.5px;top:550px;--w:94.5;transform:scaleX(0.7662);">パーティションサイズ:</div>
<div class="a inp" style="left:615px;top:546px;width:194px;height:22px;"></div>
<div class="a" style="left:792px;top:547px;width:1px;height:20px;background:#e6e6e6"></div>
<div class="a" style="left:793px;top:557px;width:15px;height:1px;background:#e6e6e6"></div>
<div class="t d" style="left:618.5px;top:550px;--w:33;transform:scaleX(0.8991);">654.07</div>
<svg style="left:796.5px;top:549px" width="8.6" height="15" viewBox="0 0 8.6 15"><path d="M4.300 .4L8.500 5H.1zM4.300 14.600L8.500 9.600H.1z" fill="#3f9ae0"/></svg>
<div class="a inp" style="left:817px;top:546px;width:50px;height:22px;"></div>
<div class="t d" style="left:820.5px;top:550px;--w:14.5;transform:scaleX(0.836);">GB</div>
<svg style="left:854.3px;top:555.3px" width="8.4" height="4.6" viewBox="0 0 8.4 4.6"><path d="M0 .3H8.400L4.200 4.600z" fill="#3f9ae0"/></svg>
<div class="t d" style="left:412.5px;top:580px;--w:103.5;transform:scaleX(0.9296);">後の未割り当て領域:</div>
<div class="a inp" style="left:615px;top:576px;width:194px;height:22px;"></div>
<div class="a" style="left:792px;top:577px;width:1px;height:20px;background:#e6e6e6"></div>
<div class="a" style="left:793px;top:587px;width:15px;height:1px;background:#e6e6e6"></div>
<div class="t d" style="left:618.5px;top:580px;--w:38.5;transform:scaleX(0.8873);">1393.93</div>
<svg style="left:796.5px;top:579px" width="8.6" height="15" viewBox="0 0 8.6 15"><path d="M4.300 .4L8.500 5H.1zM4.300 14.600L8.500 9.600H.1z" fill="#3f9ae0"/></svg>
<div class="a inp" style="left:817px;top:576px;width:50px;height:22px;"></div>
<div class="t d" style="left:820.5px;top:580px;--w:14.5;transform:scaleX(0.836);">GB</div>
<svg style="left:854.3px;top:585.3px" width="8.4" height="4.6" viewBox="0 0 8.4 4.6"><path d="M0 .3H8.400L4.200 4.600z" fill="#3f9ae0"/></svg>
<div class="t d" style="left:412.5px;top:610px;--w:125;transform:scaleX(0.7295);">パーティションのアライメント:</div>
<div class="a inp" style="left:544px;top:606px;width:63px;height:22px;"></div>
<div class="t d" style="left:548px;top:610px;--w:17;transform:scaleX(0.9444);">MB</div>
<svg style="left:594.3px;top:615.3px" width="8.4" height="4.6" viewBox="0 0 8.4 4.6"><path d="M0 .3H8.400L4.200 4.600z" fill="#3f9ae0"/></svg>
<svg style="left:401.5px;top:650.6px" width="15" height="15" viewBox="0 0 15 15"><circle cx="7.500" cy="7.500" r="7.400" fill="#3283ca"/><path d="M5.200 5.900a2.300 2.300 0 1 1 3.500 2c-.9.600-1.200 1-1.200 1.800" fill="none" stroke="#fff" stroke-width="1.600"/><circle cx="7.500" cy="11.800" r="1" fill="#fff"/></svg>
<div class="t" style="left:423px;top:651px;--w:156;transform:scaleX(0.7647);color:#2b7cd3;text-decoration:underline">パーティション作成のチュートリアル</div>
<div class="a dbtn" style="left:717px;top:646px;width:78px;height:25px;"></div>
<div class="t d" style="left:748.5px;top:650.5px;--w:16;transform:scaleX(0.8512);font-size:13px">OK</div>
<div class="a dbtn" style="left:801px;top:646px;width:78px;height:25px;"></div>
<div class="t d" style="left:815px;top:650.5px;--w:47;transform:scaleX(0.7833);">キャンセル</div>
<script>
(function(){var e=document.querySelectorAll('.t');for(var i=0;i<e.length;i++){var w=parseFloat(e[i].style.getPropertyValue('--w'));if(w>0){e[i].style.transform='none';var n=e[i].getBoundingClientRect().width;if(n>0){e[i].style.transform='scaleX('+(w/n).toFixed(4)+')';}}}})();
</script>
</body>
</html>
